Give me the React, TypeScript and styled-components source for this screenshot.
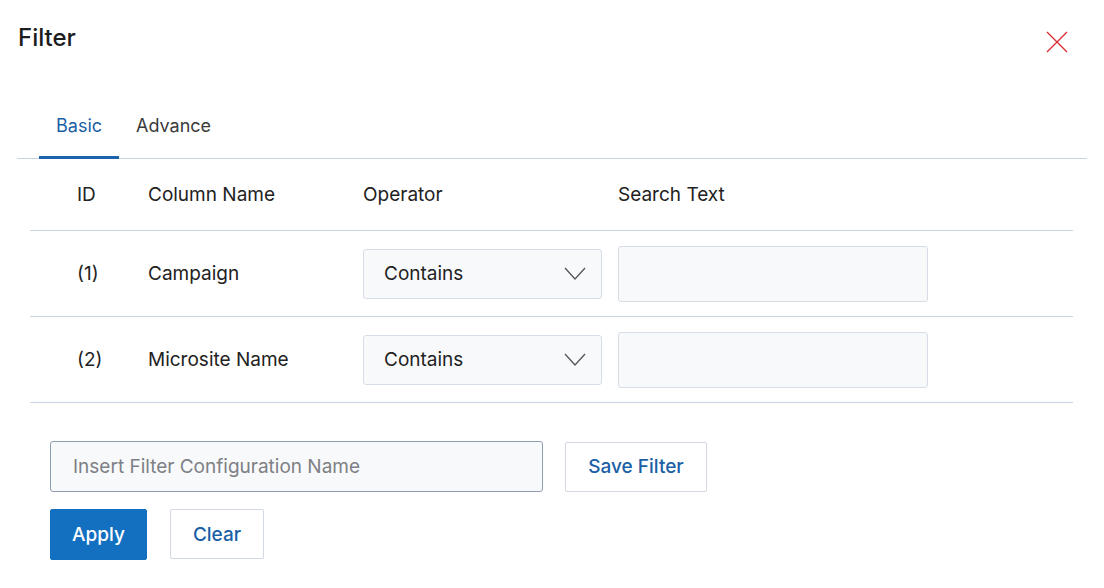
import React from "react";
import styled, { createGlobalStyle } from "styled-components";

const Global = createGlobalStyle`
  html, body { margin: 0; padding: 0; background: #fff; }
  body { font-family: Inter, "Noto Sans", sans-serif; color: #222; }
  * { box-sizing: border-box; }
`;

const Page = styled.div`
  width: 1104px;
  height: 588px;
  padding: 0 17px 0 17px;
  display: flex;
  flex-direction: column;
`;

const Header = styled.div`
  display: flex;
  justify-content: space-between;
  align-items: center;
  height: 77px;
  padding: 0 18px 0 1px;
`;

const Title = styled.h1`
  margin: 0;
  font-size: 24px;
  font-weight: 500;
  color: #1d1d1d;
  margin-top: -2px;
`;

const CloseButton = styled.button`
  border: none;
  background: none;
  padding: 0;
  width: 24px;
  height: 24px;
  display: flex;
  align-items: center;
  justify-content: center;
  margin-top: 6px;
  cursor: pointer;
`;

const TabBar = styled.div`
  display: flex;
  padding-left: 22px;
  border-bottom: 1px solid #c9d3e2;
  margin-top: 6px;
`;

const Tab = styled.div<{ $active?: boolean }>`
  padding: 12px 17px 0;
  height: 76px;
  display: flex;
  align-items: center;
  font-size: 18px;
  font-weight: 400;
  color: ${(p) => (p.$active ? "#1b5fa6" : "#3a3a3a")};
  border-bottom: 3px solid ${(p) => (p.$active ? "#1b63ab" : "transparent")};
  margin-bottom: -1px;
`;

const Table = styled.div`
  margin: 0 14px 0 13px;
  display: flex;
  flex-direction: column;
`;

const Row = styled.div<{ $head?: boolean }>`
  display: grid;
  grid-template-columns: 118px 215px 255px 1fr;
  align-items: center;
  height: ${(p) => (p.$head ? "72px" : "86px")};
  border-bottom: 1px solid #c9d3e2;
  font-size: 19px;
  color: #222;
`;

const IdCell = styled.div`
  padding-left: 47px;
`;

const Cell = styled.div``;

const Select = styled.div`
  width: 239px;
  height: 50px;
  border: 1px solid #d6dde7;
  border-radius: 3px;
  background: #f8f9fb;
  display: flex;
  align-items: center;
  justify-content: space-between;
  padding: 0 15px 0 20px;
  font-size: 19px;
  color: #222;
`;

const SearchBox = styled.input`
  width: 310px;
  height: 56px;
  border: 1px solid #d6dde7;
  border-radius: 3px;
  background: #f8f9fb;
  font-family: inherit;
  font-size: 19px;
  outline: none;
`;

const Footer = styled.div`
  padding-left: 33px;
  padding-top: 38px;
  display: flex;
  flex-direction: column;
  gap: 17px;
`;

const FooterRow = styled.div`
  display: flex;
  align-items: center;
  gap: 22px;
`;

const NameInput = styled.input`
  width: 493px;
  height: 51px;
  border: 1px solid #8f9db2;
  border-radius: 3px;
  background: #f8f9fb;
  padding: 0 22px;
  font-family: inherit;
  font-size: 19px;
  color: #222;
  outline: none;
  &::placeholder { color: #7d8084; }
`;

const Button = styled.button<{ $primary?: boolean; $w: number }>`
  width: ${(p) => p.$w}px;
  height: ${(p) => (p.$primary ? 51 : 50)}px;
  border-radius: 2px;
  border: 1px solid ${(p) => (p.$primary ? "#136fc0" : "#d2d9e3")};
  background: ${(p) => (p.$primary ? "#136fc0" : "#fff")};
  color: ${(p) => (p.$primary ? "#fff" : "#1b5fa6")};
  font-family: inherit;
  font-size: 19px;
  font-weight: 500;
  padding: 0;
  cursor: pointer;
`;

const ButtonRow = styled.div`
  display: flex;
  gap: 23px;
`;

const Chevron = () => (
  <svg width="22" height="14" viewBox="0 0 22 14">
    <path d="M1 1 L11 12 L21 1" fill="none" stroke="#555" strokeWidth="1.3" />
  </svg>
);

const rows = [
  { id: "(1)", name: "Campaign" },
  { id: "(2)", name: "Microsite Name" },
];

export default function App() {
  return (
    <>
      <Global />
      <Page>
        <Header>
          <Title>Filter</Title>
          <CloseButton aria-label="close">
            <svg width="22" height="22" viewBox="0 0 22 22">
              <path d="M1 1 L21 21 M21 1 L1 21" stroke="#d9262c" strokeWidth="1.2" />
            </svg>
          </CloseButton>
        </Header>
        <TabBar>
          <Tab $active>Basic</Tab>
          <Tab>Advance</Tab>
        </TabBar>
        <Table>
          <Row $head>
            <IdCell>ID</IdCell>
            <Cell>Column Name</Cell>
            <Cell>Operator</Cell>
            <Cell>Search Text</Cell>
          </Row>
          {rows.map((r) => (
            <Row key={r.id}>
              <IdCell>{r.id}</IdCell>
              <Cell>{r.name}</Cell>
              <Cell>
                <Select>
                  Contains
                  <Chevron />
                </Select>
              </Cell>
              <Cell>
                <SearchBox />
              </Cell>
            </Row>
          ))}
        </Table>
        <Footer>
          <FooterRow>
            <NameInput placeholder="Insert Filter Configuration Name" />
            <Button $w={142}>Save Filter</Button>
          </FooterRow>
          <ButtonRow>
            <Button $primary $w={97}>Apply</Button>
            <Button $w={94}>Clear</Button>
          </ButtonRow>
        </Footer>
      </Page>
    </>
  );
}
